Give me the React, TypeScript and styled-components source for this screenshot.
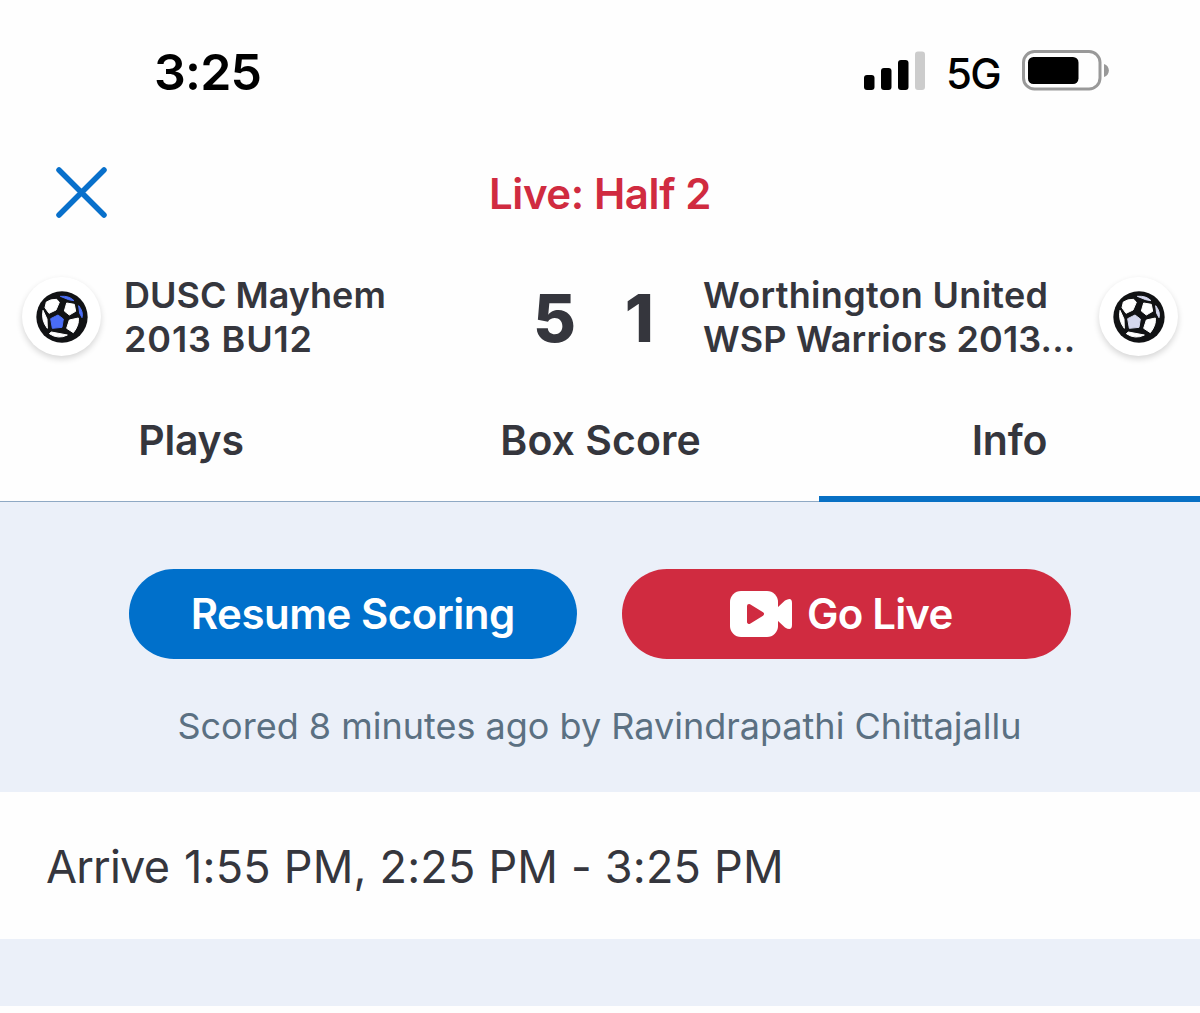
import React, { useState } from 'react'
import styled, { createGlobalStyle } from 'styled-components'

const GlobalStyle = createGlobalStyle`
  * {
    box-sizing: border-box;
  }
  body {
    margin: 0;
    background-color: #fff;
    font-family: Inter, 'Liberation Sans', sans-serif;
    color: #35363d;
  }
  button {
    border: 0;
    padding: 0;
    margin: 0;
    background: none;
    font: inherit;
    color: inherit;
  }
`

const Screen = styled.div`
  width: 1200px;
  height: 1013px;
  overflow: hidden;
  background-color: #fefefe;
`

const StatusBar = styled.div`
  height: 145px;
  padding: 42px 90px 0 154px;
  display: flex;
  justify-content: space-between;
  align-items: flex-start;
  color: #000;
`

const Clock = styled.div`
  font-size: 50px;
  line-height: 60px;
  font-weight: 600;
  letter-spacing: -0.8px;
`

const StatusIcons = styled.div`
  display: flex;
  align-items: flex-start;
  padding-top: 7px;

  svg {
    display: block;
  }
`

const Network = styled.div`
  width: 56px;
  margin: 0 20px 0 20px;
  font-size: 42px;
  line-height: 50px;
  font-weight: 500;
  letter-spacing: -1.8px;
  white-space: nowrap;
`

const TitleBar = styled.div`
  height: 96px;
  padding: 0 53px;
  display: grid;
  grid-template-columns: 60px 1fr 60px;
  align-items: center;
`

const CloseButton = styled.button`
  width: 56px;
  height: 56px;

  svg {
    display: block;
  }
`

const LiveStatus = styled.div`
  padding-top: 2px;
  color: #d02b40;
  font-size: 42px;
  line-height: 50px;
  font-weight: 600;
  text-align: center;
  letter-spacing: -0.4px;
`

const Scoreboard = styled.div`
  height: 139px;
  padding: 32px 22px 0;
  display: flex;
  align-items: flex-start;
`

const TeamBadge = styled.div`
  width: 79px;
  height: 79px;
  margin-top: 4px;
  flex: none;
  border-radius: 50%;
  background-color: #fff;
  box-shadow: 0 3px 6px rgba(0, 0, 0, 0.16);
  display: flex;
  align-items: center;
  justify-content: center;
`

const TeamName = styled.div<{ $width: number }>`
  width: ${({ $width }) => $width}px;
  margin-left: 23px;
  flex: none;
  font-size: 36px;
  line-height: 44px;
  font-weight: 600;
  white-space: nowrap;
`

const NameLine = styled.div<{ $spacing?: number }>`
  letter-spacing: ${({ $spacing = 0 }) => $spacing}px;
`

const Scores = styled.div`
  flex: 1;
  display: flex;
  justify-content: space-between;
  padding: 6px 26px 0 0;
  margin-left: -1px;
`

const Score = styled.div`
  font-size: 66px;
  line-height: 78px;
  font-weight: 800;
`

const Tabs = styled.div`
  height: 122px;
  display: grid;
  grid-template-columns: 382px 1fr 381px;
  border-bottom: 1px solid #8fa9c4;
`

const Tab = styled.button<{ $active: boolean; $spacing: number }>`
  height: 122px;
  padding-bottom: ${({ $active }) => ($active ? 0 : 6)}px;
  padding-top: 4px;
  border-bottom: ${({ $active }) => ($active ? '6px solid #0870c4' : '0')};
  font-size: 41px;
  line-height: 50px;
  font-weight: 600;
  letter-spacing: ${({ $spacing }) => $spacing}px;
`

const ActionPanel = styled.div`
  height: 290px;
  padding-top: 67px;
  background-color: #ebf0f9;
`

const Actions = styled.div`
  display: flex;
  justify-content: center;
  gap: 45px;
  padding-right: 1px;
`

const PillButton = styled.button<{ $color: string; $spacing: number; $end?: number }>`
  width: 448.5px;
  height: 90px;
  padding: 0 ${({ $end = 0 }) => $end}px 1px 0;
  border-radius: 45px;
  background-color: ${({ $color }) => $color};
  color: #fff;
  font-size: 42px;
  font-weight: 600;
  letter-spacing: ${({ $spacing }) => $spacing}px;
  display: flex;
  align-items: center;
  justify-content: center;
  gap: 14px;
`

const ScoredBy = styled.div`
  margin-top: 45px;
  padding-right: 1px;
  color: #5b7082;
  font-size: 36px;
  line-height: 44px;
  text-align: center;
  white-space: nowrap;
`

const Schedule = styled.div`
  height: 147px;
  padding: 2px 46px 0;
  display: flex;
  align-items: center;
  gap: 15px;
  font-size: 45px;
  letter-spacing: -0.8px;
  white-space: nowrap;
`

const Times = styled.span`
  letter-spacing: 0.2px;
`

const Divider = styled.div`
  height: 67px;
  background-color: #ebf0f9;
`

function SignalIcon() {
  return (
    <svg width="62" height="42" viewBox="1 0 62 42">
      <rect x="1" y="26" width="10.5" height="15" rx="3" />
      <rect x="18" y="19" width="10.5" height="22" rx="3" />
      <rect x="35" y="11" width="10.5" height="30" rx="3" />
      <rect x="52" y="2.5" width="10" height="38.5" rx="3" fill="#ccc" />
    </svg>
  )
}

function BatteryIcon() {
  return (
    <svg width="88" height="42" viewBox="0 0 88 42">
      <rect x="1.5" y="2.5" width="76.5" height="37.5" rx="11" fill="none" stroke="#999" strokeWidth="3" />
      <rect x="6" y="8" width="50.5" height="27" rx="5.5" />
      <path d="M82 15 C88.5 17 88.5 26 82 28 Z" fill="#999" />
    </svg>
  )
}

function CloseIcon() {
  return (
    <svg width="56" height="56" viewBox="0 0 56 56" stroke="#0870cb" strokeWidth="5.5" strokeLinecap="round">
      <path d="M6 5 L51 50 M51 5 L6 50" />
    </svg>
  )
}

function SoccerBall({ accent }: { accent: string }) {
  return (
    <svg width="52" height="52" viewBox="0 0 156 156" strokeWidth="3" strokeLinejoin="round">
      <circle cx="78" cy="78" r="77" fill="#111214" />
      <g fill="#fff" stroke="#fff">
        <path d="M31 33 Q44 24 62 25 L70 34 L60 57 L39 67 L27 50 Z" />
        <path d="M92 36 L115 40 L119 61 L100 72 L85 60 Z" />
        <path d="M100 87 L127 81 Q130 102 112 125 L92 112 Z" />
        <path d="M21 58 Q15 88 34 112 L33 84 Z" />
        <path d="M46 123 L94 132 Q67 146 40 128 Z" />
      </g>
      <g fill={accent} stroke={accent}>
        <path d="M66 72 L82 84 L78 109 L49 112 L44 83 Z" />
        <path d="M73 16 Q100 14 114 29 L98 26 Z" />
        <path d="M128 44 Q143 63 138 80 L131 67 Z" />
      </g>
    </svg>
  )
}

function VideoIcon() {
  return (
    <svg width="63" height="46" viewBox="0 0 63 46" fill="#fff">
      <rect x="0" y="0" width="48" height="46" rx="11" />
      <path d="M47 17 L55 9.5 Q62 5.5 62 12 V34 Q62 40.5 55 36.5 L47 29 Z" />
      <path d="M19 15 L32 23 L19 31 Z" fill="#d02b40" stroke="#d02b40" strokeWidth="4" strokeLinejoin="round" />
    </svg>
  )
}

const tabs = [
  { name: 'Plays', spacing: -0.2 },
  { name: 'Box Score', spacing: 0.05 },
  { name: 'Info', spacing: -0.2 },
]

export default function App() {
  const [activeTab, setActiveTab] = useState<string>('Info')

  return (
    <>
      <GlobalStyle />
      <Screen>
        <StatusBar>
          <Clock>3:25</Clock>
          <StatusIcons>
            <SignalIcon />
            <Network>5G</Network>
            <BatteryIcon />
          </StatusIcons>
        </StatusBar>
        <TitleBar>
          <CloseButton aria-label="Close">
            <CloseIcon />
          </CloseButton>
          <LiveStatus>Live: Half 2</LiveStatus>
        </TitleBar>
        <Scoreboard>
          <TeamBadge>
            <SoccerBall accent="#4a6df5" />
          </TeamBadge>
          <TeamName $width={410}>
            <NameLine>DUSC Mayhem</NameLine>
            <NameLine $spacing={0.85}>2013 BU12</NameLine>
          </TeamName>
          <Scores>
            <Score>5</Score>
            <Score>1</Score>
          </Scores>
          <TeamName $width={396}>
            <NameLine $spacing={0.3}>Worthington United</NameLine>
            <NameLine $spacing={0.15}>WSP Warriors 2013...</NameLine>
          </TeamName>
          <TeamBadge>
            <SoccerBall accent="#d5d8ee" />
          </TeamBadge>
        </Scoreboard>
        <Tabs>
          {tabs.map(({ name, spacing }) => (
            <Tab key={name} $active={name === activeTab} $spacing={spacing} onClick={() => setActiveTab(name)}>
              {name}
            </Tab>
          ))}
        </Tabs>
        <ActionPanel>
          <Actions>
            <PillButton $color="#0070cb" $spacing={-0.5}>Resume Scoring</PillButton>
            <PillButton $color="#d02b40" $spacing={-0.8} $end={10}>
              <VideoIcon />
              Go Live
            </PillButton>
          </Actions>
          <ScoredBy>Scored 8 minutes ago by Ravindrapathi Chittajallu</ScoredBy>
        </ActionPanel>
        <Schedule>
          <span>Arrive</span>
          <Times>1:55 PM, 2:25 PM - 3:25 PM</Times>
        </Schedule>
        <Divider />
      </Screen>
    </>
  )
}
